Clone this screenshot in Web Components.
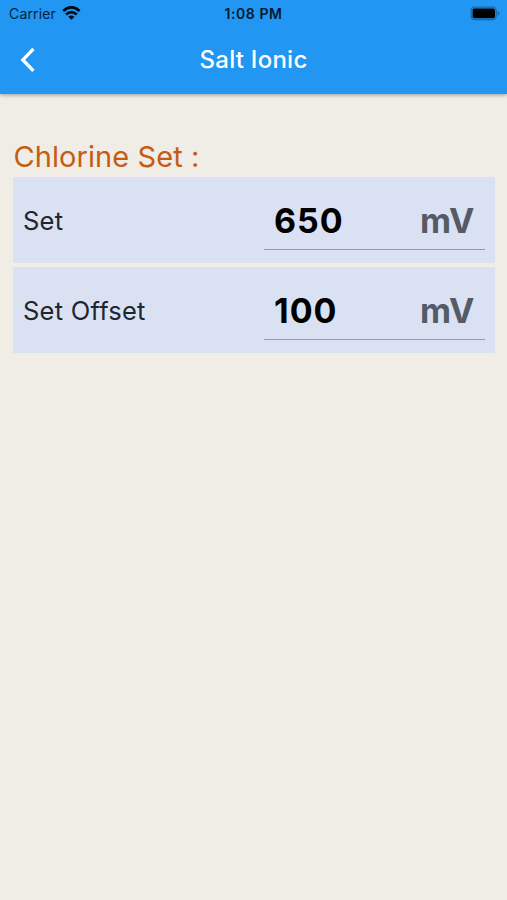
<!DOCTYPE html>
<html lang="en">
<head>
<meta charset="utf-8">
<title>Salt Ionic</title>
<style>
html, body { margin: 0; height: 100%; }
body { background: #f0ede6; font-family: Inter, "Liberation Sans", sans-serif; overflow: hidden; }
</style>
</head>
<body>
<settings-screen></settings-screen>
<script>
const define = (name, html) => customElements.define(name, class extends HTMLElement {
  constructor() {
    super();
    this.attachShadow({ mode: 'open' }).innerHTML = html;
  }
});

define('status-bar', `
<style>
:host { display: grid; grid-template-columns: 1fr auto 1fr; align-items: center; height: 27px; padding: 0 6px; color: #06223c; box-sizing: border-box; }
.left { display: flex; align-items: center; gap: 6px; padding-left: 3px; font-size: 14px; letter-spacing: 0.15px; }
.time { font-size: 14px; font-weight: 600; letter-spacing: 0.55px; color: #051a2d; }
.right { display: flex; justify-content: flex-end; }
svg { display: block; }
</style>
<div class="left"><span>Carrier</span>
<svg width="19" height="15" viewBox="0 0 19 15" fill="none" stroke="#020c16" stroke-width="2.8">
<path d="M1.2 5Q9.4-2.4 17.6 5M4 8.5Q9.4 3.7 14.8 8.5"/><path d="M6.3 10.7Q9.4 8.1 12.5 10.7L9.4 13.7Z" fill="#020c16" stroke="none"/></svg></div>
<span class="time"><slot></slot></span>
<div class="right"><svg width="31" height="15" viewBox="0 0 31 15">
<rect x="1.2" y="1.2" width="25" height="12.4" rx="3.5" fill="none" stroke="#1767a8" stroke-width="1.3"/>
<rect x="2.6" y="2.6" width="22.4" height="9.6" rx="1.8" fill="#000"/>
<path d="M27.6 5Q31.2 7.4 27.6 9.8Z" fill="#1767a8"/></svg></div>`);

define('app-bar', `
<style>
:host { display: block; height: 94px; background: #2196f3; box-shadow: 0 1px 4px rgba(0,0,0,.36); box-sizing: border-box; }
.bar { display: grid; grid-template-columns: 56px 1fr 56px; align-items: center; height: 66px; }
svg { display: block; margin-left: 19px; }
h1 { margin: 0; text-align: center; color: #fff; font-size: 24px; line-height: 30px; font-weight: 500; letter-spacing: .25px; }
</style>
<status-bar>1:08 PM</status-bar>
<div class="bar">
<svg width="18" height="26" viewBox="0 0 18 26" fill="none" stroke="#fff" stroke-width="3.4"><path d="M14.4 1.9L3.9 12.9L14.4 23.9"/></svg>
<h1><slot></slot></h1></div>`);

define('section-title', `
<style>
:host { display: block; padding-left: .5px; color: #c65c14; font-size: 29px; line-height: 40px; height: 40px; letter-spacing: .08px; white-space: nowrap; }
</style><slot></slot>`);

define('value-field', `
<style>
:host { display: flex; justify-content: space-between; align-items: center; width: 221px; height: 59px; padding: 2px 11px 0 10px; border-bottom: 1.5px solid #929cb2; box-sizing: border-box; font-size: 34px; line-height: 42px; font-weight: 700; color: #000; }
.value { letter-spacing: 1px; }
.unit { color: #545b66; letter-spacing: -.3px; }
</style><span class="value"><slot></slot></span><span class="unit"><slot name="unit"></slot></span>`);

define('setting-row', `
<style>
:host { display: flex; justify-content: space-between; align-items: flex-start; height: 85.5px; padding: 14px 10px 0; background: #dae1f2; box-sizing: border-box; }
.label { font-size: 25.5px; line-height: 32px; margin-top: 13.5px; color: #202630; letter-spacing: .25px; white-space: nowrap; }
</style><span class="label"><slot name="label"></slot></span><slot></slot>`);

define('settings-screen', `
<style>
:host { display: block; }
main { padding: 43px 12px 0 13px; }
.rows { display: grid; gap: 4.5px; }
</style>
<app-bar>Salt Ionic</app-bar>
<main>
<section-title>Chlorine Set :</section-title>
<div class="rows">
<setting-row><span slot="label">Set</span><value-field>650<span slot="unit">mV</span></value-field></setting-row>
<setting-row><span slot="label">Set Offset</span><value-field>100<span slot="unit">mV</span></value-field></setting-row>
</div>
</main>`);
</script>
</body>
</html>
